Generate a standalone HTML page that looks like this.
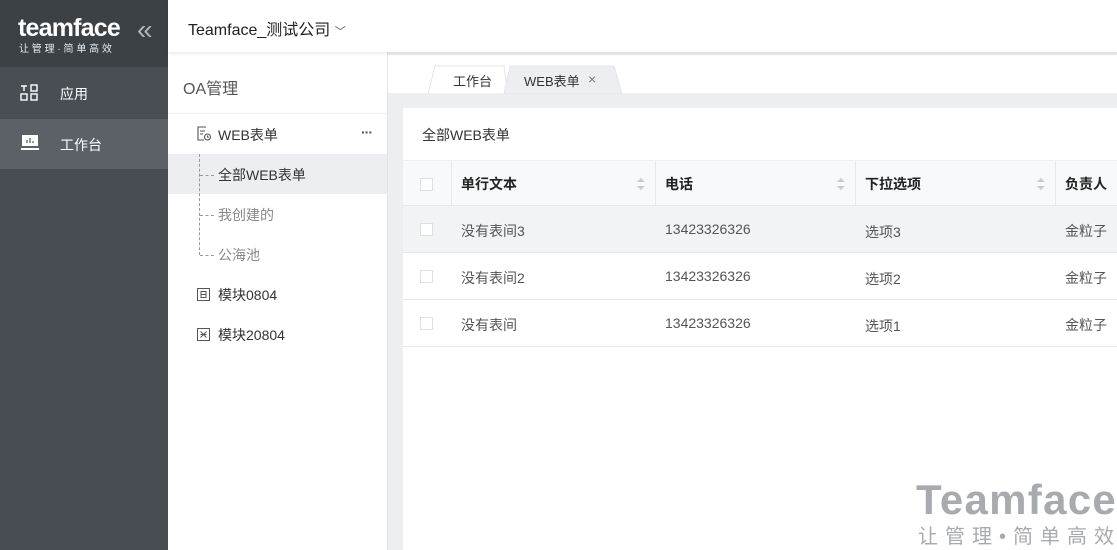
<!DOCTYPE html>
<html><head><meta charset="utf-8"><style>
*{margin:0;padding:0;box-sizing:border-box}
body{width:1117px;height:550px;overflow:hidden;position:relative;font-family:"Liberation Sans","Noto Sans CJK SC",sans-serif;background:#fff;color:#333}
.abs{position:absolute}
.side{left:0;top:0;width:168px;height:550px;background:#464c52}
.logo{left:0;top:0;width:168px;height:67px;background:#3c4146}
.m1{left:0;top:67px;width:168px;height:52px;background:#484e54}
.m2{left:0;top:119px;width:168px;height:50px;background:#5b6167}
.mt{color:#fff;font-size:14px}
.hdr{left:168px;top:0;width:949px;height:52px;background:#fff;box-shadow:0 2px 3px rgba(0,0,0,.08);z-index:2}
.p2{left:168px;top:52px;width:220px;height:498px;background:#fff;border-right:1px solid #e3e5e8}
.main{left:388px;top:52px;width:729px;height:498px;background:#eceef1}
.tabs{left:388px;top:55px;width:729px;height:38px;background:#fff}
.card{left:403px;top:108px;width:714px;height:442px;background:#fff}
.th{top:160px;height:46px;background:#f8f9fb;border-top:1px solid #eceef1;border-bottom:1px solid #e6e8eb}
.cb{width:13px;height:13px;border:1px solid #dcdfe3;background:#fff}
.t{font-size:14px}
.sort{width:8px;height:14px}
</style></head><body>
<div class="abs side"></div>
<div class="abs logo"></div>
<div class="abs" style="left:18px;top:13px;color:#fff;font-size:25px;font-weight:bold;letter-spacing:-0.8px;line-height:30px">teamface</div>
<div class="abs" style="left:19px;top:40px;color:#e6e8ea;font-size:10px;letter-spacing:2.8px">让管理·简单高效</div>
<div class="abs" style="left:137px;top:15px;color:#b0b5ba;font-size:28px;line-height:30px">«</div>
<div class="abs m1"></div>
<div class="abs m2"></div>
<svg class="abs" style="left:20px;top:84px" width="19" height="18" viewBox="0 0 19 18" fill="none" stroke="#fff" stroke-width="1.4"><path d="M1 2h6M4 2v5"/><rect x="11" y="1" width="6" height="6"/><rect x="1" y="10" width="6" height="6"/><rect x="11" y="10" width="6" height="6"/></svg>
<div class="abs mt" style="left:60px;top:84px">应用</div>
<svg class="abs" style="left:21px;top:135px" width="18" height="16" viewBox="0 0 18 16"><rect x="1" y="0" width="16" height="11" fill="#fff"/><path d="M6 8V5M9 8V3M12 8V6" stroke="#5b6167" stroke-width="1.3"/><rect x="0" y="13" width="18" height="2" fill="#fff"/></svg>
<div class="abs mt" style="left:60px;top:135px">工作台</div>

<div class="abs hdr"><div class="abs" style="left:20px;top:16px;font-size:16px;color:#222">Teamface_测试公司 <span style="font-size:11px;color:#555">﹀</span></div></div>

<div class="abs p2"></div>
<div class="abs" style="left:183px;top:75px;font-size:16px;color:#555">OA管理</div>
<div class="abs" style="left:168px;top:113px;width:219px;height:1px;background:#eceef1"></div>
<svg class="abs" style="left:196px;top:126px" width="16" height="16" viewBox="0 0 16 16" fill="none" stroke="#555" stroke-width="1.1"><path d="M10 1H2v13h6"/><path d="M4 5h5M4 8h3"/><circle cx="11.5" cy="11" r="3"/><path d="M11.5 9.5V11h1.3"/></svg>
<div class="abs t" style="left:218px;top:125px;color:#333">WEB表单</div>
<div class="abs" style="left:361px;top:124px;font-size:14px;color:#555;letter-spacing:-1px;font-weight:bold">···</div>
<div class="abs" style="left:168px;top:154px;width:219px;height:40px;background:#eceef1"></div>
<div class="abs" style="left:199px;top:154px;height:101px;border-left:1px dashed #999"></div>
<div class="abs" style="left:200px;top:175px;width:14px;border-top:1px dashed #999"></div>
<div class="abs" style="left:200px;top:215px;width:14px;border-top:1px dashed #999"></div>
<div class="abs" style="left:200px;top:255px;width:14px;border-top:1px dashed #999"></div>
<div class="abs t" style="left:218px;top:165px;color:#333">全部WEB表单</div>
<div class="abs t" style="left:218px;top:205px;color:#888">我创建的</div>
<div class="abs t" style="left:218px;top:245px;color:#888">公海池</div>
<svg class="abs" style="left:197px;top:288px" width="13" height="13" viewBox="0 0 13 13" fill="none" stroke="#555"><rect x=".5" y=".5" width="12" height="12"/><rect x="4" y="3.5" width="5" height="6"/><path d="M4 6.5h5"/></svg>
<div class="abs t" style="left:218px;top:285px;color:#333">模块0804</div>
<svg class="abs" style="left:197px;top:328px" width="13" height="13" viewBox="0 0 13 13" fill="none" stroke="#555"><rect x=".5" y=".5" width="12" height="12"/><path d="M3.5 3.5l6 6M9.5 3.5l-6 6M3.5 6.5h6"/></svg>
<div class="abs t" style="left:218px;top:325px;color:#333">模块20804</div>

<div class="abs main"></div>
<div class="abs tabs"></div>
<svg class="abs" style="left:428px;top:65px" width="200" height="29"><path d="M0 29L7 1H76L80 29Z" fill="#fff" stroke="#e3e5e8"/><path d="M76 29L82 1H186L194 29Z" fill="#eceef1" stroke="#e3e5e8"/></svg>
<div class="abs" style="left:453px;top:71px;font-size:13px;color:#333">工作台</div>
<div class="abs" style="left:524px;top:71px;font-size:13px;color:#333">WEB表单</div>
<div class="abs" style="left:588px;top:71px;font-size:14px;color:#777">×</div>

<div class="abs card"></div>
<div class="abs t" style="left:422px;top:125px;color:#333">全部WEB表单</div>
<div class="abs th" style="left:403px;width:714px"></div>
<div class="abs" style="left:451px;top:161px;width:1px;height:45px;background:#e6e8eb"></div>
<div class="abs" style="left:655px;top:161px;width:1px;height:45px;background:#e6e8eb"></div>
<div class="abs" style="left:855px;top:161px;width:1px;height:45px;background:#e6e8eb"></div>
<div class="abs" style="left:1055px;top:161px;width:1px;height:45px;background:#e6e8eb"></div>
<div class="abs cb" style="left:420px;top:178px"></div>
<div class="abs t" style="left:461px;top:174px;font-weight:bold;color:#222">单行文本</div>
<div class="abs t" style="left:665px;top:174px;font-weight:bold;color:#222">电话</div>
<div class="abs t" style="left:865px;top:174px;font-weight:bold;color:#222">下拉选项</div>
<div class="abs t" style="left:1065px;top:174px;font-weight:bold;color:#222">负责人</div>
<svg class="abs sort" style="left:637px;top:177px" viewBox="0 0 8 14" fill="#c8cbd0"><path d="M0 5L4 1L8 5ZM0 9L4 13L8 9Z"/></svg>
<svg class="abs sort" style="left:837px;top:177px" viewBox="0 0 8 14" fill="#c8cbd0"><path d="M0 5L4 1L8 5ZM0 9L4 13L8 9Z"/></svg>
<svg class="abs sort" style="left:1037px;top:177px" viewBox="0 0 8 14" fill="#c8cbd0"><path d="M0 5L4 1L8 5ZM0 9L4 13L8 9Z"/></svg>

<div class="abs" style="left:403px;top:206px;width:714px;height:47px;background:#f2f3f5;border-bottom:1px solid #e6e8eb"></div>
<div class="abs" style="left:403px;top:253px;width:714px;height:47px;border-bottom:1px solid #e6e8eb"></div>
<div class="abs" style="left:403px;top:300px;width:714px;height:47px;border-bottom:1px solid #e6e8eb"></div>
<div class="abs cb" style="left:420px;top:223px"></div>
<div class="abs cb" style="left:420px;top:270px"></div>
<div class="abs cb" style="left:420px;top:317px"></div>
<div class="abs t" style="left:461px;top:221px;color:#555">没有表间3</div>
<div class="abs t" style="left:665px;top:221px;color:#555">13423326326</div>
<div class="abs t" style="left:865px;top:222px;color:#555">选项3</div>
<div class="abs t" style="left:1065px;top:221px;color:#555">金粒子</div>
<div class="abs t" style="left:461px;top:268px;color:#555">没有表间2</div>
<div class="abs t" style="left:665px;top:268px;color:#555">13423326326</div>
<div class="abs t" style="left:865px;top:269px;color:#555">选项2</div>
<div class="abs t" style="left:1065px;top:268px;color:#555">金粒子</div>
<div class="abs t" style="left:461px;top:315px;color:#555">没有表间</div>
<div class="abs t" style="left:665px;top:315px;color:#555">13423326326</div>
<div class="abs t" style="left:865px;top:316px;color:#555">选项1</div>
<div class="abs t" style="left:1065px;top:315px;color:#555">金粒子</div>

<div class="abs" style="left:916px;top:476px;font-size:42px;font-weight:bold;color:#a7aaaf;line-height:48px;letter-spacing:1.3px">Teamface</div>
<div class="abs" style="left:918px;top:525px;font-size:20px;color:#a7aaaf;letter-spacing:7px;line-height:24px;white-space:nowrap">让管理•简单高效</div>
</body></html>
